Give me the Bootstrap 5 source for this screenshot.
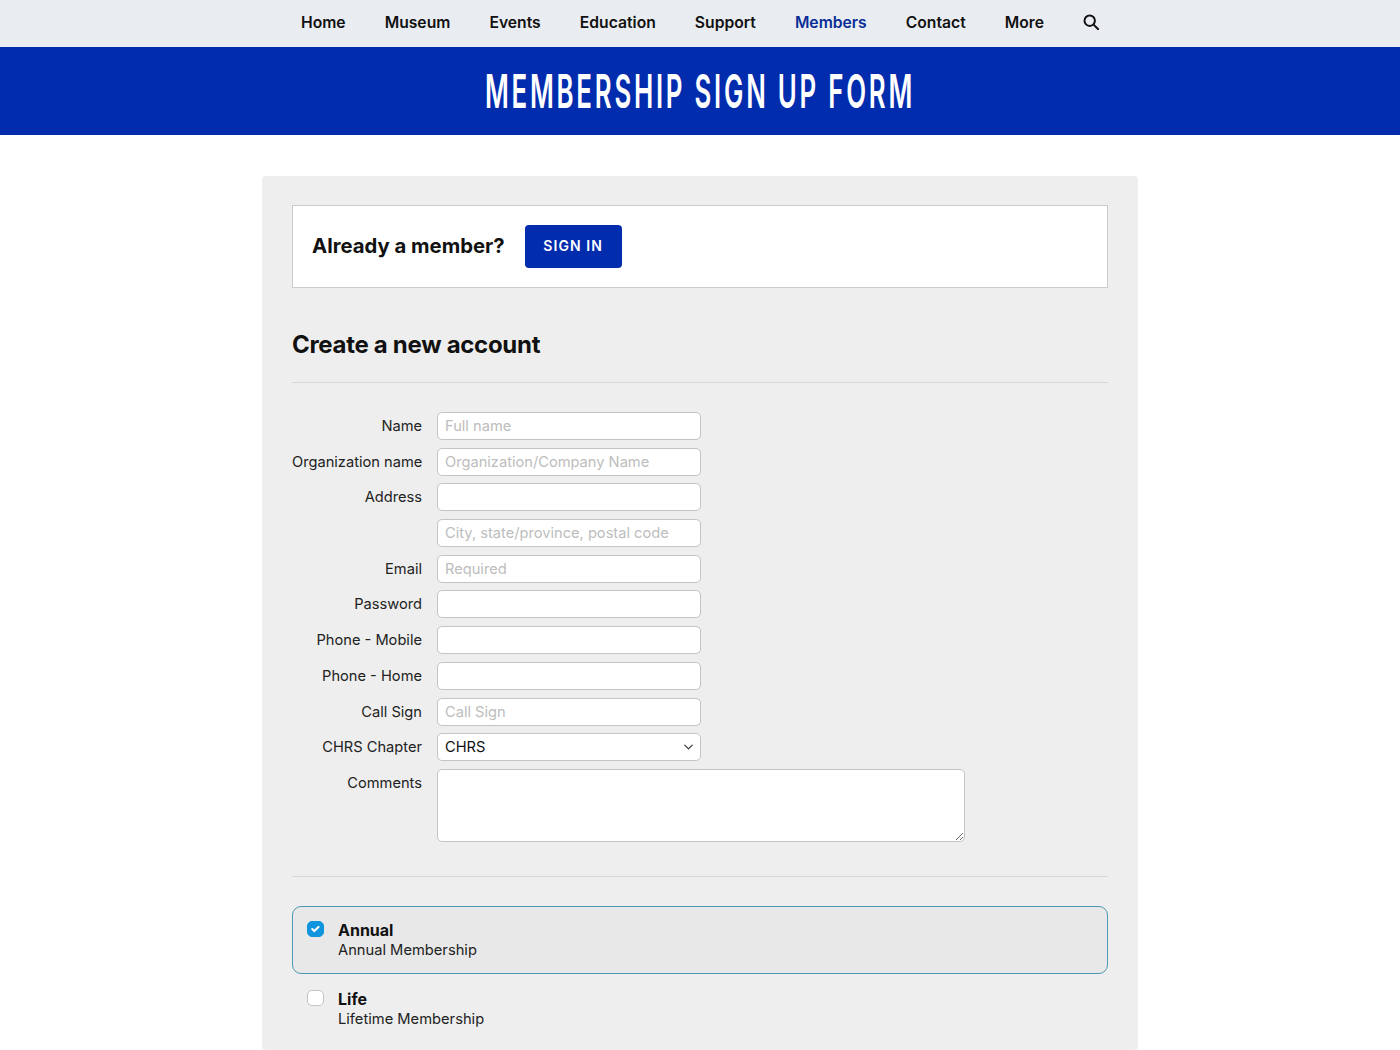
<!DOCTYPE html>
<html lang="en">
<head>
<meta charset="utf-8">
<title>Membership Sign Up Form</title>
<link href="https://cdn.jsdelivr.net/npm/bootstrap@5.3.0/dist/css/bootstrap.min.css" rel="stylesheet">
<style>
html,body{height:1050px;overflow:hidden}
body{font-family:Inter,"Liberation Sans",sans-serif;color:#222;background:#fff}
.topnav{background:#e9edf2;height:47px;gap:39.05px;padding-left:0}
.topnav a{color:#111;font-size:15.7px;font-weight:600;text-decoration:none;line-height:45px}
.topnav a.active{color:#0a2d96}
.topnav svg{display:block;margin-top:13.5px}
.banner{background:#022cae;height:88px;overflow:hidden}
.banner h1{margin:0;color:#fff;font-family:Inter,sans-serif;font-weight:600;font-size:47px;line-height:88px;letter-spacing:5px;white-space:nowrap;transform:scaleX(.55);text-transform:uppercase}
.panel{width:876px;height:874px;margin:41px auto 0;background:#eee;border-radius:4px;padding:29px 30px 0}
.signbox{background:#fff;border:1px solid #ccc;height:83px;padding:0 19px;gap:20px}
.signbox h2{font-size:20.3px;font-weight:700;color:#111;margin:0}
.signbtn{background:#022cae;color:#fff;border:0;border-radius:4px;width:97px;height:43px;font-size:14px;font-weight:600;letter-spacing:1.1px;padding:0 0 2px}
.acct{font-size:24px;font-weight:700;color:#111;margin:42px 0 22px;line-height:30px;letter-spacing:-.3px}
.rule{border:0;border-top:1px solid #d8d8d8;opacity:1;margin:0}
.formrows{margin-top:29px;gap:7.7px}
.lbl{width:130px;margin-right:15px;text-align:right;font-size:14.65px;color:#222;line-height:28px;white-space:nowrap;flex:none}
.fld{width:264px;height:28px;min-height:0;padding:0 7px;font-size:14.65px;border:1px solid #c4c4c4;border-radius:5px;color:#111;line-height:26px}
.fld::placeholder{color:#bdbdbd}
select.fld{padding-right:20px;background-position:right 5px center;background-size:13px 10px}
.cmt{width:528px;height:73px;padding:4px 7px;font-size:14.65px;border:1px solid #c4c4c4;border-radius:5px}
.rule2{margin-top:34px}
.plan{border:1px solid transparent;border-radius:9px;padding:14px 14px;height:68px;gap:14.5px}
.plan.sel{background:#e8e8e8;border-color:#4c9bb5;margin-top:29px;margin-bottom:1px}
.plan .form-check-input{width:16.5px;height:16.5px;margin:0;flex:none;border-radius:5px;border-color:#c4c4c4}
.plan .form-check-input:checked{background-color:#0e95dd;border-color:#0e95dd}
.plan .plantext{margin-top:-1px}
.plan b{display:block;font-size:16px;font-weight:700;color:#111;line-height:20px}
.plan span{display:block;font-size:14.7px;color:#222;line-height:20px}
</style>
</head>
<body>
<nav class="topnav d-flex justify-content-center">
  <a href="#">Home</a><a href="#">Museum</a><a href="#">Events</a><a href="#">Education</a><a href="#">Support</a><a href="#" class="active">Members</a><a href="#">Contact</a><a href="#">More</a>
  <a href="#" aria-label="Search"><svg width="16" height="16" viewBox="0 0 16 16" fill="none" stroke="#111" stroke-width="2"><circle cx="6.7" cy="6.7" r="5.2"/><path d="M10.6 10.6l4.6 4.6" stroke-linecap="round"/></svg></a>
</nav>
<header class="banner text-center"><h1>Membership Sign Up Form</h1></header>
<main class="panel">
  <div class="signbox d-flex align-items-center">
    <h2>Already a member?</h2>
    <button type="button" class="btn signbtn">SIGN IN</button>
  </div>
  <h3 class="acct">Create a new account</h3>
  <hr class="rule">
  <form class="formrows d-flex flex-column">
    <div class="d-flex"><label class="lbl">Name</label><input class="form-control fld" placeholder="Full name"></div>
    <div class="d-flex"><label class="lbl">Organization name</label><input class="form-control fld" placeholder="Organization/Company Name"></div>
    <div class="d-flex"><label class="lbl">Address</label><input class="form-control fld"></div>
    <div class="d-flex"><label class="lbl"></label><input class="form-control fld" placeholder="City, state/province, postal code"></div>
    <div class="d-flex"><label class="lbl">Email</label><input class="form-control fld" placeholder="Required"></div>
    <div class="d-flex"><label class="lbl">Password</label><input class="form-control fld" type="password"></div>
    <div class="d-flex"><label class="lbl">Phone - Mobile</label><input class="form-control fld"></div>
    <div class="d-flex"><label class="lbl">Phone - Home</label><input class="form-control fld"></div>
    <div class="d-flex"><label class="lbl">Call Sign</label><input class="form-control fld" placeholder="Call Sign"></div>
    <div class="d-flex"><label class="lbl">CHRS Chapter</label><select class="form-select fld"><option>CHRS</option></select></div>
    <div class="d-flex"><label class="lbl">Comments</label><textarea class="form-control cmt"></textarea></div>
  </form>
  <hr class="rule rule2">
  <div class="plan sel d-flex">
    <input class="form-check-input" type="checkbox" checked>
    <div class="plantext"><b>Annual</b><span>Annual Membership</span></div>
  </div>
  <div class="plan d-flex">
    <input class="form-check-input" type="checkbox">
    <div class="plantext"><b>Life</b><span>Lifetime Membership</span></div>
  </div>
</main>
<script src="https://cdn.jsdelivr.net/npm/bootstrap@5.3.0/dist/js/bootstrap.bundle.min.js"></script>
</body>
</html>
